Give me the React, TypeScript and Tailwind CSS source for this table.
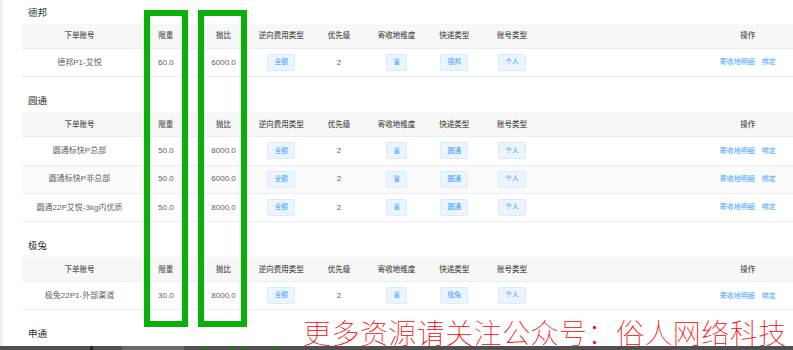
import React from "react";

type Row = { name: string; weight: string; ratio: string };

const font = "font-['Liberation_Sans','Noto_Sans_CJK_SC',sans-serif]";
const grid = "grid grid-cols-[115px_repeat(7,57.7px)_414px]";

function Tag({ children }: { children: React.ReactNode }) {
  return (
    <span className="inline-flex h-[17px] items-center rounded-[2px] border border-[#d9ecff] bg-[#ecf5ff] px-[6px] text-[6.8px] leading-none text-[#409eff]">
      {children}
    </span>
  );
}

function Section({
  title,
  express,
  rows,
  first,
}: {
  title: string;
  express: string;
  rows: Row[];
  first?: boolean;
}) {
  const headers = ["下单账号", "限重", "抛比", "逆向费用类型", "优先级", "寄收地维度", "快递类型", "账号类型", "操作"];
  return (
    <div className={first ? "mt-[2px]" : "mt-[13px]"}>
      <div className="flex h-[22px] items-center pl-[6px] text-[9.5px] text-[#303133]">{title}</div>
      <div className={`${grid} h-[25px] items-center border-b border-[#ebeef5] bg-[#f7f7f7] text-[7.5px] font-medium text-[#555]`}>
        {headers.map((h) => (
          <div key={h} className="text-center">
            {h}
          </div>
        ))}
      </div>
      {rows.map((r, i) => (
        <div
          key={r.name}
          className={`${grid} h-[28.3px] items-center border-b border-[#ebeef5] text-[8px] text-[#606266] ${
            i % 2 === 1 ? "bg-[#fafafa]" : "bg-white"
          }`}
        >
          <div className="text-center">{r.name}</div>
          <div className="text-center">{r.weight}</div>
          <div className="text-center">{r.ratio}</div>
          <div className="flex justify-center">
            <Tag>全额</Tag>
          </div>
          <div className="text-center">2</div>
          <div className="flex justify-center">
            <Tag>省</Tag>
          </div>
          <div className="flex justify-center">
            <Tag>{express}</Tag>
          </div>
          <div className="flex justify-center">
            <Tag>个人</Tag>
          </div>
          <div className="flex justify-center gap-[7px] text-[7px] text-[#409eff]">
            <span>寄收地明细</span>
            <span>绑定</span>
          </div>
        </div>
      ))}
    </div>
  );
}

export default function App() {
  return (
    <div className={`relative h-[350px] w-[793px] overflow-hidden bg-white ${font}`}>
      <div className="absolute left-0 top-0 h-full w-[3px] bg-[#eceef2]" />
      <div className="w-[933px] pl-[22px]">
        <Section
          first
          title="德邦"
          express="德邦"
          rows={[{ name: "德邦P1-艾悦", weight: "60.0", ratio: "6000.0" }]}
        />
        <Section
          title="圆通"
          express="圆通"
          rows={[
            { name: "圆通标快P总部", weight: "50.0", ratio: "8000.0" },
            { name: "圆通标快P非总部", weight: "50.0", ratio: "6000.0" },
            { name: "圆通22P艾悦-3kg内优质", weight: "50.0", ratio: "8000.0" },
          ]}
        />
        <Section
          title="极兔"
          express="极兔"
          rows={[{ name: "极兔22P1-外部渠道", weight: "30.0", ratio: "8000.0" }]}
        />
        <div className="mt-[13px] flex h-[22px] items-center pl-[6px] text-[9.5px] text-[#303133]">申通</div>
      </div>

      {/* green annotation boxes */}
      <div className="absolute left-[144px] top-[10px] h-[317px] w-[44px] border-[6px] border-[#0aaf0a]" />
      <div className="absolute left-[198px] top-[10px] h-[317px] w-[49px] border-[6px] border-[#0aaf0a]" />

      {/* dark strip at bottom */}
      <div className="absolute bottom-0 left-0 h-[4px] w-full bg-[#505050]">
        <div className="absolute left-[90px] top-0 h-full w-[3px] bg-[#2a2a2a]" />
        <div className="absolute left-[122px] top-0 h-full w-[62px] bg-[#6a6a6a]" />
        <div className="absolute left-[202px] top-0 h-full w-[3px] bg-[#1a7a1a]" />
        <div className="absolute left-[230px] top-0 h-full w-[3px] bg-[#1a7a1a]" />
        <div className="absolute left-[242px] top-0 h-full w-[3px] bg-[#1a7a1a]" />
        <div className="absolute left-[275px] top-0 h-full w-[3px] bg-[#1a7a1a]" />
      </div>

      {/* watermark */}
      <div className="absolute left-[303px] top-[316px] whitespace-nowrap font-['Noto_Sans_CJK_SC',serif] text-[28px] font-thin leading-[32px] tracking-[0.45px] text-[#ff0000]">
        更多资源请关注公众号：俗人网络科技
      </div>
    </div>
  );
}
